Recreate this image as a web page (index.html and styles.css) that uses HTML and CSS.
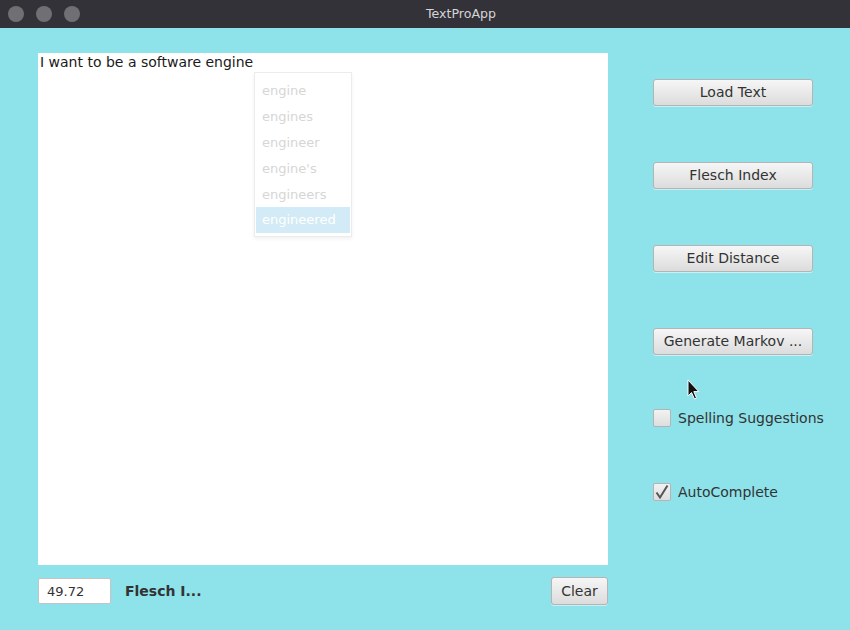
FILE: index.html
```html
<!DOCTYPE html>
<html>
<head>
<meta charset="utf-8">
<link rel="stylesheet" href="styles.css">
</head>
<body>
<div class="window">
  <div class="titlebar">
    <div class="lights"><span class="dot"></span><span class="dot"></span><span class="dot"></span></div>
    <div class="title">TextProApp</div>
  </div>
  <div class="content">
    <div class="left">
      <div class="editor">
        <div class="editor-text">I want to be a software engine</div>
        <ul class="popup">
          <li>engine</li>
          <li>engines</li>
          <li>engineer</li>
          <li>engine's</li>
          <li>engineers</li>
          <li class="selected">engineered</li>
        </ul>
      </div>
      <div class="bottom">
        <div class="field">49.72</div>
        <div class="label">Flesch I...</div>
        <button class="btn clear">Clear</button>
      </div>
    </div>
    <div class="right">
      <button class="btn side">Load Text</button>
      <button class="btn side">Flesch Index</button>
      <button class="btn side">Edit Distance</button>
      <button class="btn side">Generate Markov ...</button>
      <label class="check first"><span class="box"></span>Spelling Suggestions</label>
      <label class="check second"><span class="box checked"><svg width="16" height="16" viewBox="0 0 16 16"><path d="M2.5 8.5 L6 13.5 L13.5 1.5" fill="none" stroke="#555" stroke-width="2" stroke-linejoin="miter"/></svg></span>AutoComplete</label>
    </div>
  </div>
  <svg class="cursor" width="14" height="22" viewBox="0 0 14 22"><path d="M1 1 L1 17 L4.5 13.5 L7.5 20 L9.5 19 L6.8 12.6 L11.8 12.6 Z" fill="#111" stroke="#fff" stroke-width="1"/></svg>
</div>
</body>
</html>
```
FILE: styles.css
```css
html, body {
  margin: 0;
  padding: 0;
}
body {
  width: 850px;
  height: 630px;
  overflow: hidden;
  background: #8ee2ea;
  font-family: "DejaVu Sans", sans-serif;
  font-size: 14px;
  color: #333;
}
.window {
  position: relative;
  width: 850px;
  height: 630px;
  display: flex;
  flex-direction: column;
}
.titlebar {
  height: 28px;
  background: #323238;
  display: flex;
  align-items: center;
  position: relative;
  flex-shrink: 0;
}
.lights {
  display: flex;
  gap: 12px;
  padding-left: 8px;
}
.dot {
  width: 16px;
  height: 16px;
  border-radius: 50%;
  background: #707074;
}
.title {
  position: absolute;
  left: 72px;
  right: 0;
  text-align: center;
  color: #d4d4d6;
  font-size: 12.6px;
  top: 6px;
}
.content {
  display: flex;
  padding: 25px 0 0 38px;
}
.left {
  width: 570px;
  display: flex;
  flex-direction: column;
}
.editor {
  position: relative;
  height: 512px;
  background: #fff;
}
.editor-text {
  padding: 1px 0 0 2px;
  color: #1a1a1a;
  font-size: 14px;
  line-height: 17px;
}
.popup {
  position: absolute;
  left: 216px;
  top: 19px;
  width: 94px;
  margin: 0;
  padding: 5px 1px 3px;
  list-style: none;
  background: #fff;
  border: 1px solid #ececec;
  box-shadow: 0 2px 4px rgba(0,0,0,0.06);
  font-size: 13px;
}
.popup li {
  height: 26px;
  line-height: 25px;
  padding-left: 6px;
  color: #d6d6d6;
}
.popup li.selected {
  background: #d3ebf6;
  color: #fff;
  margin-top: -1px;
}
.bottom {
  display: flex;
  align-items: center;
  margin-top: 12px;
  height: 28px;
}
.field {
  width: 63px;
  height: 24px;
  line-height: 25px;
  padding-left: 8px;
  background: #fff;
  border: 1px solid #c4c4c4;
  border-radius: 2px;
  color: #333;
  font-size: 13px;
}
.label {
  margin-left: 14px;
  font-weight: bold;
  color: #333;
  font-size: 14px;
}
.btn {
  font-family: "DejaVu Sans", sans-serif;
  font-size: 14px;
  color: #333;
  background: linear-gradient(#f6f6f6, #dcdcdc);
  border: 1px solid #b4b4b4;
  border-radius: 3px;
  box-shadow: 0 1px 0 rgba(255,255,255,0.5);
  padding: 0 0 2px;
  margin: 0;
}
.clear {
  margin-left: auto;
  width: 57px;
  height: 28px;
  padding: 0;
}
.right {
  margin-left: 45px;
  display: flex;
  flex-direction: column;
  padding-top: 26px;
}
.side {
  width: 160px;
  height: 27px;
  margin-bottom: 56px;
}
.side:last-of-type {
  margin-bottom: 0;
}
.check {
  display: flex;
  align-items: center;
  gap: 7px;
  color: #333;
  font-size: 14px;
}
.check.first {
  margin-top: 54px;
}
.check.second {
  margin-top: 56px;
}
.box {
  width: 16px;
  height: 16px;
  border: 1px solid #b4b4b4;
  border-radius: 2px;
  background: linear-gradient(#f2f2f2, #dedede);
  display: flex;
  align-items: center;
  justify-content: center;
}
.cursor {
  position: absolute;
  left: 687px;
  top: 379px;
}
```
